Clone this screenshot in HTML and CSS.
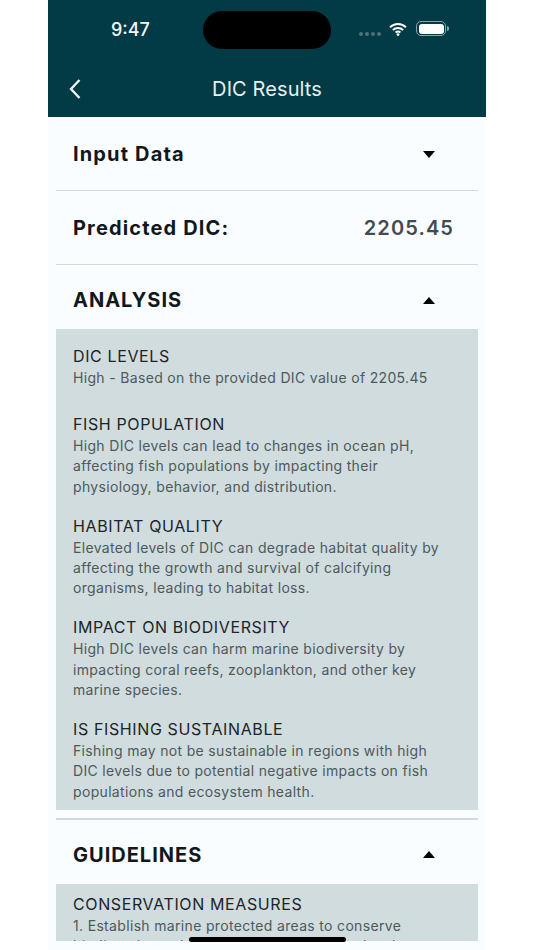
FILE: index.html
```html
<!DOCTYPE html>
<html lang="en">
<head>
<meta charset="utf-8">
<title>DIC Results</title>
<link rel="stylesheet" href="styles.css">
</head>
<body>
<div class="phone">
  <header class="header">
    <div class="status">
      <span class="time">9:47</span>
      <span class="island"></span>
      <div class="status-icons">
        <span class="dots"><i></i><i></i><i></i><i></i></span>
        <svg class="wifi" width="18" height="14" viewBox="0 0 18 14"><path d="M1 5.2a11.5 11.5 0 0 1 16 0M3.9 8a7.4 7.4 0 0 1 10.2 0M6.6 10.6a3.6 3.6 0 0 1 4.8 0" fill="none" stroke="#fff" stroke-width="2"/><circle cx="9" cy="12.6" r="1.4" fill="#fff"/></svg>
        <span class="battery"><span class="battery-fill"></span></span>
        <span class="battery-cap"></span>
      </div>
    </div>
    <div class="nav">
      <svg class="back" width="14" height="22" viewBox="0 0 14 22"><path d="M11.5 2 3 11l8.5 9" fill="none" stroke="#eef6f7" stroke-width="2.4"/></svg>
      <h1 class="nav-title">DIC Results</h1>
    </div>
  </header>
  <main class="content">
    <section class="row row-first">
      <h2 class="row-title">Input Data</h2>
      <span class="caret caret-down"></span>
    </section>
    <hr class="divider">
    <section class="row">
      <h2 class="row-title">Predicted DIC:</h2>
      <span class="value">2205.45</span>
    </section>
    <hr class="divider">
    <section class="row row-open">
      <h2 class="row-title caps">ANALYSIS</h2>
      <span class="caret caret-up"></span>
    </section>
    <div class="panel">
      <div class="item item-short">
        <h3 class="item-title">DIC LEVELS</h3>
        <p class="item-text">High - Based on the provided DIC value of 2205.45</p>
      </div>
      <div class="item">
        <h3 class="item-title">FISH POPULATION</h3>
        <p class="item-text">High DIC levels can lead to changes in ocean pH,<br>affecting fish populations by impacting their<br>physiology, behavior, and distribution.</p>
      </div>
      <div class="item">
        <h3 class="item-title">HABITAT QUALITY</h3>
        <p class="item-text">Elevated levels of DIC can degrade habitat quality by<br>affecting the growth and survival of calcifying<br>organisms, leading to habitat loss.</p>
      </div>
      <div class="item">
        <h3 class="item-title">IMPACT ON BIODIVERSITY</h3>
        <p class="item-text">High DIC levels can harm marine biodiversity by<br>impacting coral reefs, zooplankton, and other key<br>marine species.</p>
      </div>
      <div class="item">
        <h3 class="item-title">IS FISHING SUSTAINABLE</h3>
        <p class="item-text">Fishing may not be sustainable in regions with high<br>DIC levels due to potential negative impacts on fish<br>populations and ecosystem health.</p>
      </div>
    </div>
    <hr class="divider divider-gap">
    <section class="row row-open">
      <h2 class="row-title caps">GUIDELINES</h2>
      <span class="caret caret-up"></span>
    </section>
    <div class="panel panel-clipped">
      <div class="item">
        <h3 class="item-title">CONSERVATION MEASURES</h3>
        <p class="item-text">1. Establish marine protected areas to conserve<br>biodiversity and ecosystems and support local</p>
      </div>
    </div>
  </main>
  <span class="home-bar"></span>
</div>
</body>
</html>
```
FILE: styles.css
```css
* { box-sizing: border-box; }
html, body { margin: 0; padding: 0; background: #fff; }
body { font-family: Inter, "Liberation Sans", sans-serif; }
.phone { position: relative; width: 438px; height: 950px; margin: 0 auto; background: #f9fdff; overflow: hidden; }
.header { height: 117px; background: #023a45; color: #fff; }
.status { position: relative; height: 58px; }
.time { position: absolute; left: 63px; top: 19px; font-size: 18px; font-weight: 500; color: #f2f7f8; line-height: 22px; }
.island { position: absolute; left: 155px; top: 11px; width: 128px; height: 38px; border-radius: 19px; background: #000; }
.status-icons { position: absolute; left: 311px; top: 21px; display: flex; align-items: center; }
.dots { display: flex; gap: 2px; margin-right: 8px; align-self: flex-end; }
.dots i { width: 4px; height: 4px; border-radius: 50%; background: #4d7279; }
.wifi { margin-right: 9px; }
.battery { width: 30px; height: 15px; border: 1.5px solid #8aa5aa; border-radius: 5px; padding: 1.5px; display: flex; }
.battery-fill { flex: 1; background: #fff; border-radius: 3px; }
.battery-cap { width: 2px; height: 5px; margin-left: 1px; background: #8aa5aa; border-radius: 0 2px 2px 0; }
.nav { position: relative; height: 59px; display: flex; align-items: center; justify-content: center; padding-top: 2px; }
.back { position: absolute; left: 20px; top: 20px; }
.nav-title { margin: 0; font-size: 20px; font-weight: 400; color: #e6f0f2; line-height: 26px; letter-spacing: 0.1px; }
.content { height: 824px; padding: 0 8px; overflow: hidden; }
.row { height: 72.5px; display: flex; align-items: center; justify-content: space-between; padding: 2px 24px 0 17px; }
.row-open { height: 64px; padding-top: 6px; }
.row-title { margin: 0; font-size: 20px; font-weight: 700; color: #11181c; letter-spacing: 1.15px; line-height: 26px; }
.caps { letter-spacing: 1px; }
.value { font-size: 20px; font-weight: 600; color: #444b4e; letter-spacing: 1.1px; }
.caret { width: 0; height: 0; border-left: 6.5px solid transparent; border-right: 6.5px solid transparent; margin-right: 19px; }
.caret-down { border-top: 7px solid #000; }
.caret-up { border-bottom: 7px solid #000; }
.divider { margin: 0; border: 0; height: 1.5px; background: #d3dadc; }
.divider-gap { margin-top: 8px; }
.panel { background: #d0dcde; padding: 16px 17px 8px; }
.panel-clipped { height: 57px; padding-top: 9px; overflow: hidden; }
.item { margin-bottom: 17.4px; }
.item-short { margin-bottom: 24.6px; }
.panel .item:last-child { margin-bottom: 0; }
.item-title { margin: 0; font-size: 16px; font-weight: 400; color: #1d2427; letter-spacing: 0.62px; line-height: 22px; }
.item-text { margin: 1px 0 0; font-size: 14px; color: #4e595c; letter-spacing: 0.33px; line-height: 20.4px; }
.home-bar { position: absolute; left: 141px; top: 937px; width: 157px; height: 5px; border-radius: 3px; background: #000; }
```
